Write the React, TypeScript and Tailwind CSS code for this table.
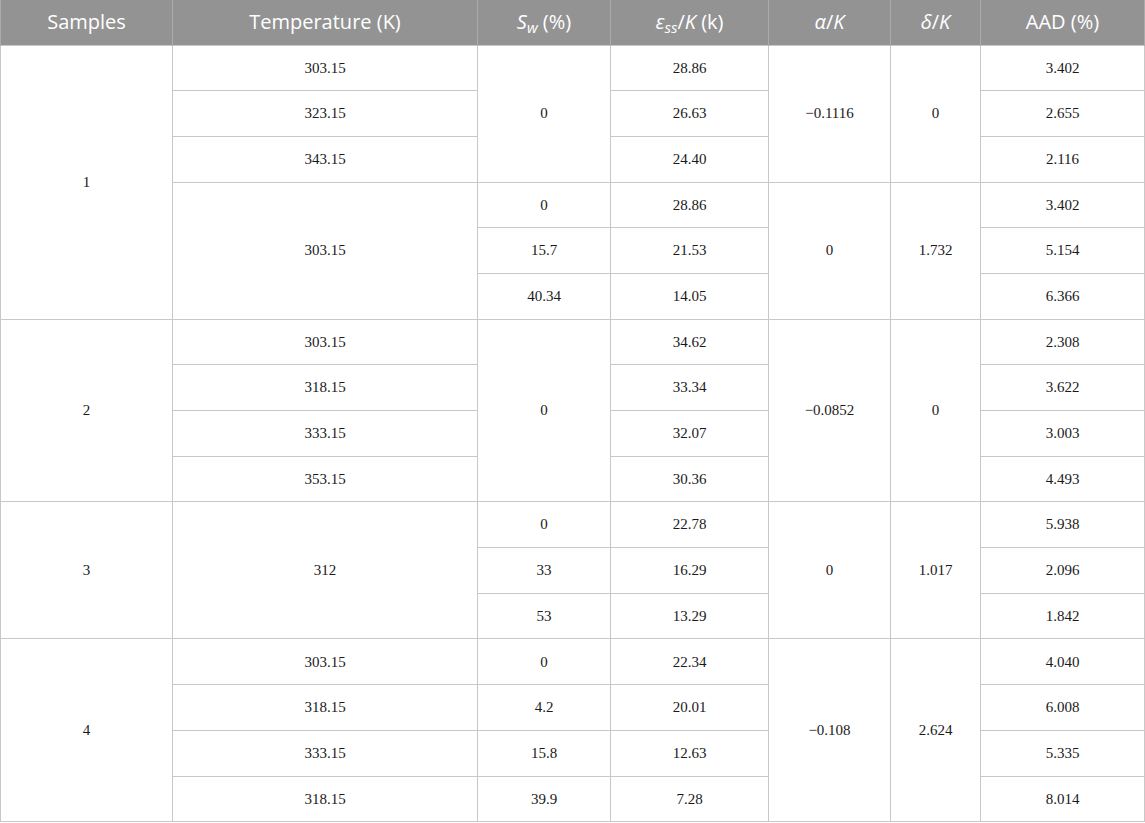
import React from 'react';

type Cell = { v: string; span?: number };

// each row: list of cells present in that row (rowSpan'd cells omitted on later rows)
const rows: Cell[][] = [
    [{v: '1', span: 6}, {v: '303.15'}, {v: '0', span: 3}, {v: '28.86'}, {v: '\u22120.1116', span: 3}, {v: '0', span: 3}, {v: '3.402'}],
    [{v: '323.15'}, {v: '26.63'}, {v: '2.655'}],
    [{v: '343.15'}, {v: '24.40'}, {v: '2.116'}],
    [{v: '303.15', span: 3}, {v: '0'}, {v: '28.86'}, {v: '0', span: 3}, {v: '1.732', span: 3}, {v: '3.402'}],
    [{v: '15.7'}, {v: '21.53'}, {v: '5.154'}],
    [{v: '40.34'}, {v: '14.05'}, {v: '6.366'}],
    [{v: '2', span: 4}, {v: '303.15'}, {v: '0', span: 4}, {v: '34.62'}, {v: '\u22120.0852', span: 4}, {v: '0', span: 4}, {v: '2.308'}],
    [{v: '318.15'}, {v: '33.34'}, {v: '3.622'}],
    [{v: '333.15'}, {v: '32.07'}, {v: '3.003'}],
    [{v: '353.15'}, {v: '30.36'}, {v: '4.493'}],
    [{v: '3', span: 3}, {v: '312', span: 3}, {v: '0'}, {v: '22.78'}, {v: '0', span: 3}, {v: '1.017', span: 3}, {v: '5.938'}],
    [{v: '33'}, {v: '16.29'}, {v: '2.096'}],
    [{v: '53'}, {v: '13.29'}, {v: '1.842'}],
    [{v: '4', span: 4}, {v: '303.15'}, {v: '0'}, {v: '22.34'}, {v: '\u22120.108', span: 4}, {v: '2.624', span: 4}, {v: '4.040'}],
    [{v: '318.15'}, {v: '4.2'}, {v: '20.01'}, {v: '6.008'}],
    [{v: '333.15'}, {v: '15.8'}, {v: '12.63'}, {v: '5.335'}],
    [{v: '318.15'}, {v: '39.9'}, {v: '7.28'}, {v: '8.014'}],
];

const widths = ['w-[172px]', 'w-[305px]', 'w-[133px]', 'w-[158px]', 'w-[122px]', 'w-[90px]', 'w-[164px]'];

const th = 'h-[45px] border-x border-[#ababab] bg-[#939393] px-2 text-center align-middle text-[20px] font-normal text-white';

const App: React.FC = () => {
    return (
        <div className="min-h-[823px] w-[1145px] bg-white">
            <table className="w-[1144px] table-fixed border-collapse" style={{fontFamily: '"Liberation Serif", serif'}}>
                <colgroup>
                    {widths.map((w) => (
                        <col key={w} className={w} />
                    ))}
                </colgroup>
                <thead className="font-['Open_Sans',sans-serif]">
                    <tr>
                        <th className={th}>Samples</th>
                        <th className={th}>Temperature (K)</th>
                        <th className={th}>
                            <i>S</i>
                            <sub className="italic">w</sub> (%)
                        </th>
                        <th className={th}>
                            <i>ε</i>
                            <sub className="italic">ss</sub>/<i>K</i> (k)
                        </th>
                        <th className={th}>
                            <i>α</i>/<i>K</i>
                        </th>
                        <th className={th}>
                            <i>δ</i>/<i>K</i>
                        </th>
                        <th className={th}>AAD (%)</th>
                    </tr>
                </thead>
                <tbody className="text-[15px] text-[#1a1a1a]">
                    {rows.map((row, i) => (
                        <tr key={i} className="h-[45.7px]">
                            {row.map((c, j) => (
                                <td
                                    key={j}
                                    rowSpan={c.span}
                                    className="border border-[#c8c8c8] px-2 text-center align-middle"
                                >
                                    {c.v}
                                </td>
                            ))}
                        </tr>
                    ))}
                </tbody>
            </table>
        </div>
    );
};

export default App;
